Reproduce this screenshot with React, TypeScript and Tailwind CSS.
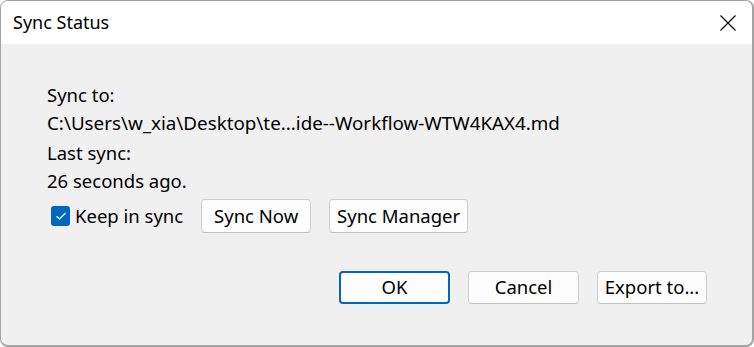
import React from 'react';

const font = { fontFamily: '"Noto Sans", "Open Sans", sans-serif' };

const Btn: React.FC<{ label: string; primary?: boolean; className?: string }> = ({ label, primary, className }) => (
  <button
    className={`flex items-center justify-center bg-[#fdfdfd] rounded-[4px] text-[18.5px] text-black leading-none ${
      primary ? 'border-2 border-[#0067c0]' : 'border border-[#d0d0d0] border-b-[#c0c0c0]'
    } ${className ?? ''}`}
  >
    {label}
  </button>
);

export default function App() {
  return (
    <div className="w-[754px] h-[347px] bg-white" style={font}>
      <div className="w-full h-full flex flex-col rounded-[8px] overflow-hidden border-l border-t border-r-2 border-b-2 border-[#a3a3a3] bg-[#f0f0f0]">
        {/* title bar */}
        <div className="h-[43px] bg-white flex items-center justify-between pl-[12px] pr-[15px]">
          <span className="text-[18px] text-black">Sync Status</span>
          <svg width="18" height="18" viewBox="0 0 18 18" className="text-black">
            <path d="M1.5 1.5 L16.5 16.5 M16.5 1.5 L1.5 16.5" stroke="currentColor" strokeWidth="1.2" fill="none" />
          </svg>
        </div>

        {/* body */}
        <div className="flex-1 flex flex-col pl-[46px] pr-[45px] pt-[36px] text-[18.5px] text-black">
          <div className="leading-[29px]">Sync to:</div>
          <div className="leading-[29px] text-[18.8px]">C:\Users\w_xia\Desktop\te...ide--Workflow-WTW4KAX4.md</div>
          <div className="leading-[29px]">Last sync:</div>
          <div className="leading-[27px]">26 seconds ago.</div>

          <div className="flex items-center mt-[5px] h-[34px]">
            <div className="flex items-center gap-[5px] ml-[4px]">
              <span className="w-[19px] h-[20px] rounded-[3px] bg-[#0067c0] flex items-center justify-center">
                <svg width="12" height="10" viewBox="0 0 12 10">
                  <path d="M1.5 5.2 L4.5 8 L10.5 2" stroke="white" strokeWidth="1.2" fill="none" />
                </svg>
              </span>
              <span>Keep in sync</span>
            </div>
            <Btn label="Sync Now" className="ml-[18px] w-[110px] h-[34px]" />
            <Btn label="Sync Manager" className="ml-[18px] w-[139px] h-[34px]" />
          </div>

          <div className="flex justify-end gap-[18px] mt-[38px]">
            <Btn label="OK" primary className="w-[111px] h-[33px]" />
            <Btn label="Cancel" className="w-[111px] h-[33px]" />
            <Btn label="Export to..." className="w-[110px] h-[33px]" />
          </div>
        </div>
      </div>
    </div>
  );
}
